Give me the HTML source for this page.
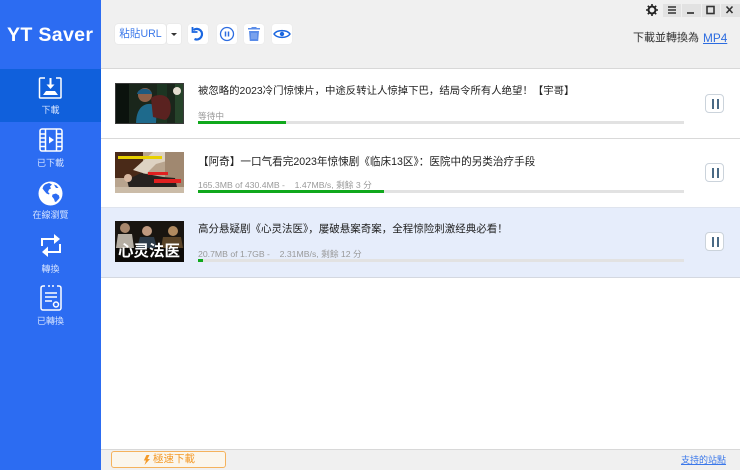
<!DOCTYPE html>
<html><head><meta charset="utf-8">
<style>
*{box-sizing:border-box}
html,body{margin:0;padding:0;width:740px;height:470px;overflow:hidden;background:#fff;font-family:"Liberation Sans","Noto Sans CJK SC",sans-serif}
div,span,svg{position:absolute;white-space:nowrap}
.nav{color:#d5e3ff;font-size:9px;line-height:12px;width:101px;text-align:center;left:0}
.title{left:198px;font-size:10.4px;line-height:14px;color:#222}
.sub{left:198px;font-size:8.7px;line-height:12px;color:#999}
.bar{left:198px;width:486px;height:3px;background:#e2e2e2}
.bar div{left:0;top:0;height:3px;background:#10a81c}
.pbtn{left:705px;width:19px;height:19px;border:1px solid #cbd3db;border-radius:4px;background:#fff}
.pbtn i{position:absolute;top:4px;width:2px;height:10px;background:#4a6a85}
.tb{top:24px;width:20px;height:20px;background:#fff;border-radius:3px;box-shadow:0 0 1px #ddd}
</style></head><body>
<!-- header -->
<div style="left:101px;top:0;width:639px;height:69px;background:#f0f0f0;border-bottom:1px solid #d8d8d8"></div>
<!-- sidebar -->
<div style="left:0;top:0;width:101px;height:470px;background:#2c6cf2"></div>
<div style="left:0;top:69px;width:101px;height:53px;background:#1060dc"></div>
<div style="left:7px;top:22px;font-size:19.6px;line-height:26px;font-weight:bold;color:#fff;letter-spacing:.3px">YT Saver</div>

<svg style="left:38px;top:76px" width="26" height="24" viewBox="0 0 26 24" fill="none" stroke="#fff" stroke-width="1.5"><path d="M7 2H2.5a1 1 0 0 0-1 1V21a1 1 0 0 0 1 1H22a1 1 0 0 0 1-1V3a1 1 0 0 0-1-1H18"/><path d="M12.5 2v9" stroke-width="2"/><path d="M8.500 8.500h8l-4 4.500z" fill="#fff" stroke="none"/><path d="M8 15h9l3 4H5z" fill="#fff" stroke="none"/></svg>
<div class="nav" style="top:104px">下載</div>

<svg style="left:39px;top:128px" width="24" height="24" viewBox="0 0 24 24" fill="none" stroke="#fff" stroke-width="1.500"><rect x="1" y="1" width="22" height="22" rx="2"/><path d="M6.500 1v22M17.500 1v22M1 6h5.500M1 10h5.500M1 14h5.500M1 18.500h5.500M17.500 6H23M17.500 10H23M17.500 14H23M17.500 18.500H23"/><path d="M10 8.500l5 3.500-5 3.500z" fill="#fff" stroke="none"/></svg>
<div class="nav" style="top:157px">已下載</div>

<svg style="left:38px;top:181px" width="25" height="25" viewBox="0 0 25 25"><circle cx="12.500" cy="12.500" r="12" fill="#fff"/><path d="M7 3.500l4-1.500 3 1.500-2 2 1 2-2 1-1 2.500 1.500 1.500-.5 1-2.500-1-2.500-3-1.500-2 1-2.500zM14.500 13.500l3.500-1 3 2 .5 2.500-3 3.500-1.500.5-1-3-2-2.500zM16 3.500l2.500 1 2 2.500-2.500 0-1-1.500z" fill="#2c6cf2"/></svg>
<div class="nav" style="top:209px">在線瀏覽</div>

<svg style="left:40px;top:233px" width="22" height="25" viewBox="0 0 22 25" fill="none" stroke="#fff" stroke-width="2"><path d="M2 13V6h14"/><path d="M14 1l6 5-6 5z" fill="#fff" stroke="none"/><path d="M20 11v8H6"/><path d="M8 13.500l-6 5.500 6 5z" fill="#fff" stroke="none"/></svg>
<div class="nav" style="top:263px">轉換</div>

<svg style="left:40px;top:285px" width="22" height="26" viewBox="0 0 22 26" fill="none" stroke="#fff" stroke-width="1.500"><path d="M5 1H3a2 2 0 0 0-2 2V23a2 2 0 0 0 2 2H19a2 2 0 0 0 2-2V3a2 2 0 0 0-2-2H17M8 1h2M12 1h2"/><path d="M5 8h12M5 12h12M5 16h7"/><circle cx="16" cy="19.500" r="2.500"/></svg>
<div class="nav" style="top:315px">已轉換</div>

<!-- toolbar -->
<div style="left:115px;top:24px;width:51px;height:20px;background:#fff;border-radius:3px;box-shadow:0 0 1px #ccc;color:#3b78ea;font-size:10.6px;line-height:20px;text-align:center">粘貼URL</div>
<div style="left:167px;top:24px;width:14px;height:20px;background:#fff;border-radius:2px;box-shadow:0 0 1px #ccc"></div>
<div style="left:171px;top:33px;width:0;height:0;border:3px solid transparent;border-top:3px solid #333;border-bottom:0"></div>
<div class="tb" style="left:188px"></div>
<svg style="left:190px;top:26px" width="16" height="16" viewBox="0 0 16 16" fill="none" stroke="#1a66e0" stroke-width="2.200"><path d="M3.500 4A5.300 5.300 0 1 1 4.500 13"/><path d="M2.500 1V6H7.500" fill="none" stroke-width="1.800"/></svg>
<div class="tb" style="left:217px"></div>
<svg style="left:219px;top:26px" width="16" height="16" viewBox="0 0 16 16" fill="none" stroke="#2c6ce0" stroke-width="1.300"><circle cx="8" cy="8" r="6.500"/><path d="M6.500 5.500v5M9.500 5.500v5" stroke-width="1.500"/></svg>
<div class="tb" style="left:244px"></div>
<svg style="left:246px;top:26px" width="16" height="16" viewBox="0 0 16 16"><path d="M5.500 2V1h5v1H14v1.500H2V2z" fill="#5a8ce8"/><path d="M3 5h10l-.8 10H3.800z" fill="#5a8ce8"/><path d="M6 7v6M8 7v6M10 7v6" stroke="#a8c4f4" stroke-width=".8"/></svg>
<div class="tb" style="left:272px"></div>
<svg style="left:273px;top:28px" width="18" height="12" viewBox="0 0 18 12" fill="none" stroke="#1a66e0" stroke-width="1.500"><path d="M1 6C4 1.500 14 1.500 17 6 14 10.500 4 10.500 1 6z"/><circle cx="9" cy="6" r="2.200" fill="#1a66e0" stroke="none"/></svg>

<!-- window controls -->
<svg style="left:646px;top:4px" width="12" height="12" viewBox="0 0 12 12"><circle cx="6" cy="6" r="3.500" fill="none" stroke="#222" stroke-width="2"/><path d="M6 0v2.500M6 9.500V12M0 6h2.500M9.500 6H12M1.800 1.800l1.700 1.700M8.500 8.500l1.700 1.700M10.200 1.800L8.500 3.500M3.500 8.500l-1.700 1.700" stroke="#222" stroke-width="1.600"/></svg>
<div style="left:663px;top:4px;width:77px;height:13px;background:#e2e2e2"></div>
<div style="left:681px;top:4px;width:1px;height:13px;background:#f0f0f0"></div>
<div style="left:701px;top:4px;width:1px;height:13px;background:#f0f0f0"></div>
<div style="left:720px;top:4px;width:1px;height:13px;background:#f0f0f0"></div>
<svg style="left:663px;top:3px" width="77" height="14" viewBox="0 0 77 14" fill="none" stroke="#333" stroke-width="1.400"><path d="M5 4h8M5 7h8M5 10h8"/><path d="M24 10h7" stroke-width="1.700"/><rect x="44" y="3.500" width="7" height="7" stroke-width="1.600"/><path d="M63.500 3.500l6 6.500M69.500 3.500l-6 6.500" stroke-width="1.600"/></svg>

<div style="left:633px;top:30px;font-size:11px;line-height:16px;color:#333">下載並轉換為</div>
<div style="left:703px;top:30px;font-size:11.800px;line-height:16px;color:#2c6ce0;text-decoration:underline">MP4</div>

<!-- row 1 -->
<div style="left:101px;top:138px;width:639px;height:1px;background:#d9d9d9"></div>
<svg style="left:115px;top:83px" width="69" height="41" viewBox="0 0 69 41"><rect width="69" height="41" fill="#1a261b"/><rect x="0" y="0" width="14" height="41" fill="#0b120d"/><rect x="42" y="0" width="10" height="41" fill="#1c3522"/><rect x="60" y="0" width="9" height="41" fill="#26432a"/><circle cx="30" cy="12" r="7" fill="#8e6048"/><path d="M22 11c1-7 14-7 15 0z" fill="#1d5a80"/><path d="M21 41c0-16 8-21 15-20 5 1 6 10 5 20z" fill="#1e6a8c"/><path d="M36 15c6-5 17-4 19 4 2 8 0 16-5 18l-12-3z" fill="#5a2220"/><circle cx="62" cy="8" r="4" fill="#e4ddd0"/><rect x=".5" y=".5" width="68" height="40" fill="none" stroke="#3a3a3a"/></svg>
<div class="title" style="top:85px">被忽略的2023冷门惊悚片，中途反转让人惊掉下巴，结局令所有人绝望！【宇哥】</div>
<div class="sub" style="top:110px">等待中</div>
<div class="bar" style="top:121px"><div style="width:88px"></div></div>
<div class="pbtn" style="top:94px"><i style="left:6px"></i><i style="left:11px"></i></div>

<!-- row 2 -->
<svg style="left:115px;top:152px" width="69" height="41" viewBox="0 0 69 41"><rect width="69" height="41" fill="#b8a48e"/><rect x="0" y="0" width="28" height="26" fill="#4a2a18"/><path d="M18 18L38 0h14l3 8-14 4-10 10z" fill="#ddd2c2"/><path d="M50 0h19v41H50z" fill="#a08870"/><path d="M12 28l14-7 22 4 12 1 2 9-34 3-14-2z" fill="#26221f"/><circle cx="13" cy="26" r="4" fill="#d8b8a0"/><rect x="0" y="35" width="69" height="6" fill="#cbbca8"/><rect x="3" y="4" width="44" height="3" fill="#e8d000"/><rect x="33" y="20" width="20" height="3" fill="#e02020"/><rect x="39" y="27" width="27" height="4" fill="#e02020"/></svg>
<div class="title" style="top:155px;font-size:10.6px">【阿奇】一口气看完2023年惊悚剧《临床13区》：医院中的另类治疗手段</div>
<div class="sub" style="top:179px">165.3MB of 430.4MB -&nbsp;&nbsp;&nbsp; 1.47MB/s, 剩餘 3 分</div>
<div class="bar" style="top:190px"><div style="width:186px"></div></div>
<div class="pbtn" style="top:163px"><i style="left:6px"></i><i style="left:11px"></i></div>

<!-- row 3 -->
<div style="left:101px;top:208px;width:639px;height:70px;background:#e6edfb;border-bottom:1px solid #d4d8e0"></div>
<div style="left:101px;top:207px;width:639px;height:1px;background:#dfe4ee"></div>
<svg style="left:115px;top:221px" width="69" height="41" viewBox="0 0 69 41"><rect width="69" height="41" fill="#191510"/><circle cx="10" cy="7" r="5" fill="#a8876c"/><path d="M3 13h14l2 14H1z" fill="#b5aea3"/><circle cx="32" cy="10" r="5" fill="#c09a80"/><path d="M25 16h14l3 11H22z" fill="#2c3a48"/><circle cx="58" cy="10" r="5" fill="#b08a60"/><path d="M48 16h18l2 11H46z" fill="#5a4428"/><rect y="27" width="69" height="14" fill="#0c0a08"/></svg>
<div style="left:118px;top:234px;font-size:15.500px;line-height:36px;font-weight:bold;color:#fff">心灵法医</div>
<div class="title" style="top:222px;font-size:10.5px">高分悬疑剧《心灵法医》，屡破悬案奇案，全程惊险刺激经典必看！</div>
<div class="sub" style="top:248px">20.7MB of 1.7GB -&nbsp;&nbsp;&nbsp; 2.31MB/s, 剩餘 12 分</div>
<div class="bar" style="top:259px"><div style="width:5px"></div></div>
<div class="pbtn" style="top:232px"><i style="left:6px"></i><i style="left:11px"></i></div>

<!-- footer -->
<div style="left:101px;top:449px;width:639px;height:21px;background:#f0f0f0;border-top:1px solid #d8d8d8"></div>
<div style="left:111px;top:451px;width:115px;height:17px;border:1px solid #f5b25c;border-radius:3px;background:#fbf6ec"></div>
<svg style="left:143px;top:455px" width="7" height="10" viewBox="0 0 7 10"><path d="M3.500 0H6.500L4.500 4H7L1.500 10 3 5.500H.8z" fill="#f39a2a"/></svg>
<div style="left:153px;top:452px;font-size:10.500px;line-height:15px;color:#f39a2a">極速下載</div>
<div style="left:681px;top:454px;font-size:9px;line-height:13px;color:#3b78ea;text-decoration:underline">支持的站點</div>
</body></html>
